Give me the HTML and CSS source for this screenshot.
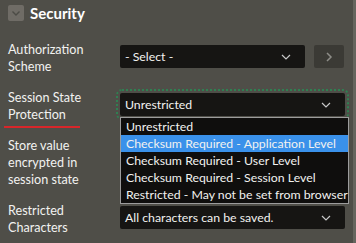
FILE: index.html
```html
<!DOCTYPE html>
<html lang="en">
<head>
    <meta charset="UTF-8">
    <meta name="viewport" content="width=device-width, initial-scale=1.0">
    <title>Security</title>
    <link rel="stylesheet" href="styles.css">
</head>
<body>
    <div class="page">
        <div class="region-header">
            <span class="toggle">
                <svg width="16" height="16" viewBox="0 0 16 16"><path d="M4.5 6.5 L8 10 L11.5 6.5" fill="none" stroke="#4c4b46" stroke-width="1.4"/></svg>
            </span>
            <h2>Security</h2>
        </div>

        <div class="form">
            <div class="field">
                <label>Authorization Scheme</label>
                <div class="control">
                    <div class="select narrow">
                        <span>- Select -</span>
                        <svg class="chev" width="10" height="6" viewBox="0 0 10 6"><path d="M1 1 L5 5 L9 1" fill="none" stroke="#c8c8c8" stroke-width="1.2"/></svg>
                    </div>
                    <button class="goto">
                        <svg width="8" height="10" viewBox="0 0 8 10"><path d="M2 1 L6 5 L2 9" fill="none" stroke="#8e8d88" stroke-width="1.5"/></svg>
                    </button>
                </div>
            </div>

            <div class="field">
                <label class="underlined">Session State Protection</label>
                <div class="control">
                    <div class="select focused">
                        <span>Unrestricted</span>
                        <svg class="chev" width="10" height="6" viewBox="0 0 10 6"><path d="M1 1 L5 5 L9 1" fill="none" stroke="#c8c8c8" stroke-width="1.2"/></svg>
                        <ul class="options">
                            <li>Unrestricted</li>
                            <li class="active">Checksum Required - Application Level</li>
                            <li>Checksum Required - User Level</li>
                            <li>Checksum Required - Session Level</li>
                            <li>Restricted - May not be set from browser</li>
                        </ul>
                    </div>
                </div>
            </div>

            <div class="field">
                <label class="wrap">Store value encrypted in session state</label>
                <div class="control"></div>
            </div>

            <div class="field">
                <label>Restricted Characters</label>
                <div class="control">
                    <div class="select">
                        <span>All characters can be saved.</span>
                        <svg class="chev" width="10" height="6" viewBox="0 0 10 6"><path d="M1 1 L5 5 L9 1" fill="none" stroke="#c8c8c8" stroke-width="1.2"/></svg>
                    </div>
                </div>
            </div>
        </div>
    </div>
</body>
</html>
```

FILE: styles.css
```css
* {
    box-sizing: border-box;
}
body {
    margin: 0;
    background-color: #4f4e48;
    color: #f2f2f0;
    font-family: Lato, "Liberation Sans", Arial, sans-serif;
    font-size: 12.6px;
    line-height: 17px;
}
.page {
    width: 356px;
    height: 243px;
    padding: 5px 0 0 8px;
    border-right: 3px solid #66655e;
    overflow: hidden;
}
.region-header {
    display: flex;
    align-items: center;
    gap: 6px;
    height: 16px;
}
.toggle {
    width: 16px;
    height: 16px;
    background-color: #6f6c66;
    border-radius: 2px;
    display: flex;
}
.region-header h2 {
    margin: 0;
    font-size: 15px;
    font-weight: bold;
    color: #ffffff;
}
.form {
    display: flex;
    flex-direction: column;
    gap: 14px;
    margin-top: 20px;
}
.field {
    display: flex;
    align-items: flex-start;
}
.field label {
    width: 112px;
    padding-right: 12px;
}
.field label.wrap {
    padding-right: 26px;
}
.underlined {
    position: relative;
}
.underlined::after {
    content: "";
    position: absolute;
    left: -4px;
    top: 37px;
    width: 76px;
    height: 2px;
    background-color: #d8262a;
}
.control {
    display: flex;
    gap: 9px;
    margin-top: 4px;
}
.select {
    position: relative;
    width: 225px;
    height: 23px;
    background-color: #161513;
    border-radius: 2px;
    padding: 0 14px 0 5px;
    display: flex;
    align-items: center;
    justify-content: space-between;
    font-size: 12.3px;
}
.select.narrow {
    width: 185px;
}
.select.focused {
    outline: 2px dotted #2f8052;
    outline-offset: 2px;
}
.goto {
    width: 30px;
    height: 23px;
    border: none;
    border-radius: 2px;
    background-color: #3b3a35;
    display: flex;
    align-items: center;
    justify-content: center;
    padding: 0;
}
.options {
    position: absolute;
    left: 0;
    top: 24px;
    width: 229px;
    margin: 0;
    padding: 0;
    list-style: none;
    background-color: #0f0e0d;
    border: 1px solid #9c9c9c;
    z-index: 2;
}
.options li {
    height: 17px;
    padding-left: 5px;
    white-space: nowrap;
}
.options li.active {
    background-color: #3a91ea;
}
```
